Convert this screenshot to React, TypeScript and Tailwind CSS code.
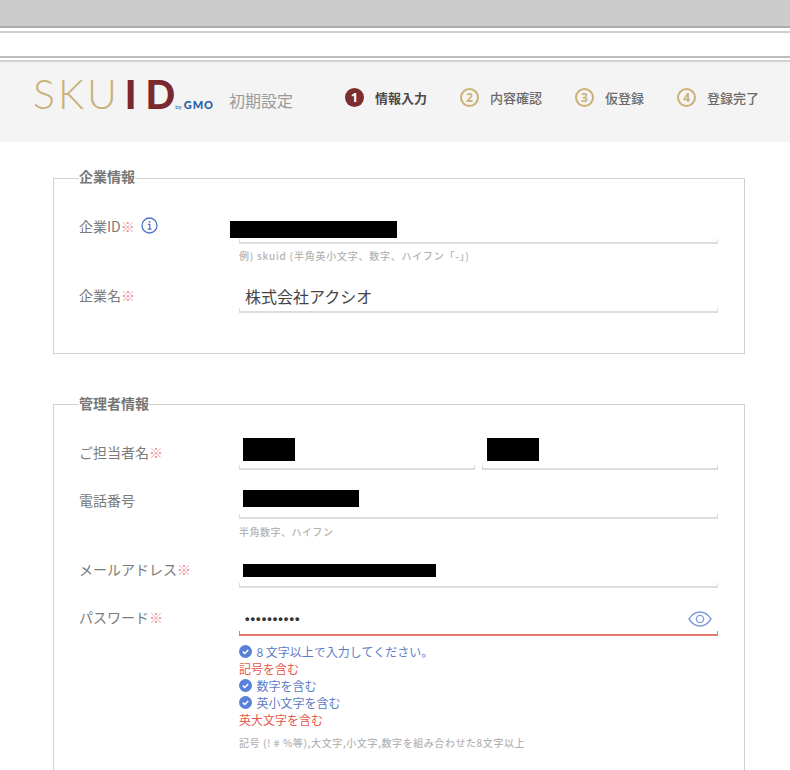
const jp = { fontFamily: '"Noto Sans CJK JP", "Noto Sans", sans-serif' };

function Req() {
  return <span className="text-[#ee8a8a]">※</span>;
}

function Underline({ red = false }: { red?: boolean }) {
  return (
    <div className={`h-[5px] border-x border-b-2 ${red ? "border-[#e4776c]" : "border-[#dcdcdc]"} [border-left-width:1px] [border-right-width:1px]`} />
  );
}

function Hint({ children }: { children: React.ReactNode }) {
  return <p className="text-[10px] font-medium leading-[14px] tracking-[0.5px] text-[#b4b4b4]">{children}</p>;
}

function Label({ children }: { children: React.ReactNode }) {
  return <div className="w-[160px] shrink-0 text-[14px] leading-[20px] text-[#7b7b7b]">{children}</div>;
}

function Redacted({ className }: { className: string }) {
  return <div className={`bg-black ${className}`} />;
}

function InfoIcon() {
  return (
    <svg width="17" height="17" viewBox="0 0 17 17" fill="none" stroke="#4f74c8">
      <circle cx="8.5" cy="8.5" r="7.5" strokeWidth="1.3" />
      <path d="M6.8 7.4h2v4.6M6.6 12.2h4" strokeWidth="1.3" />
      <circle cx="8.5" cy="4.9" r="0.9" fill="#4f74c8" stroke="none" />
    </svg>
  );
}

function EyeIcon() {
  return (
    <svg width="24" height="16" viewBox="0 0 24 16" fill="none" stroke="#7f9edb" strokeWidth="1.4">
      <path d="M1 8C4 3.4 8 1 12 1s8 2.4 11 7c-3 4.6-7 7-11 7S4 12.6 1 8z" />
      <circle cx="12" cy="8" r="3.6" />
    </svg>
  );
}

function CheckItem({ ok, children }: { ok: boolean; children: React.ReactNode }) {
  if (!ok) return <div className="h-[17px] text-[12px] leading-[17px] text-[#e8584a]">{children}</div>;
  return (
    <div className="flex h-[17px] items-center gap-[4.5px] text-[12px] leading-[17px] text-[#5f7cc8]">
      <svg width="13" height="13" viewBox="0 0 13 13">
        <circle cx="6.5" cy="6.5" r="6.5" fill="#5b80d8" />
        <path d="M3.8 6.6l2 1.9 3.4-3.5" fill="none" stroke="#fff" strokeWidth="1.5" />
      </svg>
      <span>{children}</span>
    </div>
  );
}

const steps = [
  { n: "1", label: "情報入力" },
  { n: "2", label: "内容確認" },
  { n: "3", label: "仮登録" },
  { n: "4", label: "登録完了" },
];

function Stepper() {
  return (
    <div className="ml-[52px] mt-[26px] flex gap-[33px]">
      {steps.map((s, i) => (
        <div key={s.n} className="flex h-[19px] items-center gap-[11px]">
          <span
            className={
              i === 0
                ? "flex size-[19px] items-center justify-center rounded-full bg-[#7b2d2f] text-[13px] font-bold text-white"
                : "flex size-[19px] items-center justify-center rounded-full border-2 border-[#ccb176] text-[12px] font-bold text-[#ccb176]"
            }
            style={{ fontFamily: '"Noto Sans", sans-serif' }}
          >
            {s.n}
          </span>
          <span className={i === 0 ? "text-[13px] font-bold text-[#4a4a4a]" : "text-[13px] font-medium text-[#6b6b6b]"}>{s.label}</span>
        </div>
      ))}
    </div>
  );
}

function Logo() {
  return (
    <div className="ml-[33px] mt-[7px] flex h-[50px] w-[196px] shrink-0 items-baseline" style={{ fontFamily: "Lato, sans-serif" }}>
      <span className="text-[41px] font-light leading-[50px] tracking-[3px] text-[#c8b27a]">SKU</span>
      <span className="ml-[5px] text-[39px] font-black leading-[50px] text-[#7a2a2e]">I</span>
      <span className="ml-[9px] text-[39px] font-black leading-[50px] text-[#7a2a2e]">D</span>
      <span className="text-[6px] text-[#1f5fa8]">by</span>
      <span className="ml-[2px] text-[11px] font-black tracking-[1px] text-[#1f5fa8]">GMO</span>
    </div>
  );
}

export default function App() {
  return (
    <div className="h-[770px] w-[790px] overflow-hidden bg-white" style={jp}>
      <div className="h-[26px] bg-[#cccccc]" />
      <div className="h-[2px] bg-[#adadad]" />
      <div className="h-[3px]" />
      <div className="h-[2px] bg-[#cfcfcf]" />
      <div className="h-[23px]" />
      <div className="h-[2px] bg-[#bdbdbd]" />
      <div className="h-[2px]" />
      <div className="h-[2px] bg-[#d2d2d2]" />

      <header className="flex h-[80px] bg-[#f4f4f4]">
        <Logo />
        <div className="mt-[26px] text-[16px] leading-[24px] text-[#9a9a9a]">初期設定</div>
        <Stepper />
      </header>

      <fieldset className="ml-[53px] mt-[28px] h-[184px] w-[692px] border border-[#d2d2d2] pl-[25px]">
        <legend className="relative -top-[2px] text-[14px] font-bold leading-[17px] text-[#777]">企業情報</legend>
        <div className="mt-[28px] flex">
          <Label>
            <div className="flex items-center">
              <span className="pt-px">企業ID<Req /></span>
              <span className="ml-[6px]"><InfoIcon /></span>
            </div>
          </Label>
          <div className="w-[479px]">
            <div className="h-[24px] pt-[6px]">
              <Redacted className="-ml-[9px] h-[17px] w-[167px]" />
            </div>
            <Underline />
            <div className="mt-[5px]"><Hint><span className="tracking-[0.75px]">例) skuid (半角英小文字、数字、ハイフン「-」)</span></Hint></div>
          </div>
        </div>
        <div className="mt-[21px] flex">
          <div className="pt-px"><Label>企業名<Req /></Label></div>
          <div className="w-[479px]">
            <div className="h-[24px] pl-[6px] text-[16px] leading-[24px] text-[#444]">株式会社アクシオ</div>
            <Underline />
          </div>
        </div>
      </fieldset>

      <fieldset className="ml-[53px] mt-[42px] h-[420px] w-[692px] border border-[#d2d2d2] pl-[25px]">
        <legend className="relative -top-px text-[14px] font-bold leading-[17px] text-[#777]">管理者情報</legend>
        <div className="mt-[25px] flex">
          <div className="pt-[4px]"><Label>ご担当者名<Req /></Label></div>
          <div className="flex w-[479px] gap-[7px]">
            <div className="flex-1">
              <div className="h-[27px] pl-[4px]"><Redacted className="h-[23px] w-[52px]" /></div>
              <Underline />
            </div>
            <div className="flex-1">
              <div className="h-[27px] pl-[5px]"><Redacted className="h-[23px] w-[52px]" /></div>
              <Underline />
            </div>
          </div>
        </div>
        <div className="mt-[20px] flex">
          <Label>電話番号</Label>
          <div className="w-[479px]">
            <div className="h-[24px] pl-[4px]"><Redacted className="h-[17px] w-[116px]" /></div>
            <Underline />
            <div className="mt-[6px]"><Hint>半角数字、ハイフン</Hint></div>
          </div>
        </div>
        <div className="mt-[20px] flex">
          <Label>メールアドレス<Req /></Label>
          <div className="w-[479px]">
            <div className="h-[24px] pl-[4px] pt-[5px]"><Redacted className="h-[13px] w-[193px]" /></div>
            <Underline />
          </div>
        </div>
        <div className="mt-[18px] flex">
          <div className="pt-[1px]"><Label>パスワード<Req /></Label></div>
          <div className="w-[479px]">
            <div className="flex h-[25px] items-center justify-between pl-[6px] pr-[6px]">
              <span className="text-[13px] font-bold leading-[24px] tracking-[1px] text-[#333]" style={{ fontFamily: '"Liberation Sans", sans-serif' }}>••••••••••</span>
              <EyeIcon />
            </div>
            <Underline red />
            <div className="mt-[7px]">
              <CheckItem ok>8 文字以上で入力してください。</CheckItem>
              <CheckItem ok={false}>記号を含む</CheckItem>
              <CheckItem ok>数字を含む</CheckItem>
              <CheckItem ok>英小文字を含む</CheckItem>
              <CheckItem ok={false}>英大文字を含む</CheckItem>
            </div>
            <div className="mt-[8px]"><Hint><span className="tracking-[0.56px]">記号 (! # %等),大文字,小文字,数字を組み合わせた8文字以上</span></Hint></div>
          </div>
        </div>
      </fieldset>
    </div>
  );
}
